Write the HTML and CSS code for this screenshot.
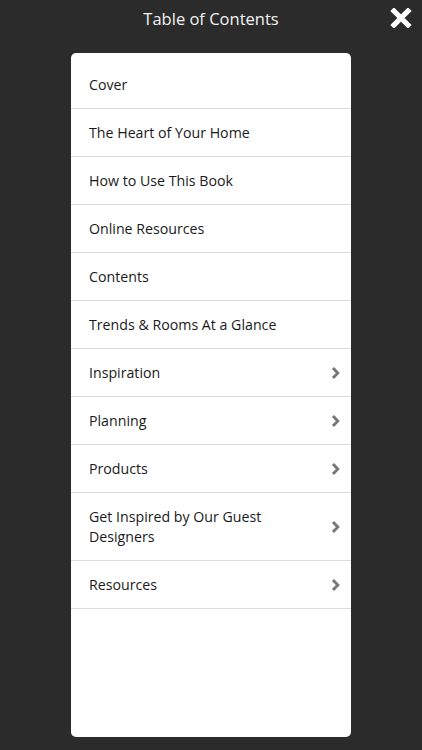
FILE: index.html
```html
<!DOCTYPE html>
<html lang="en">
<head>
<meta charset="utf-8">
<title>Table of Contents</title>
<link rel="stylesheet" href="styles.css">
</head>
<body>
<div class="screen">
  <header class="topbar">
    <h1 class="title">Table of Contents</h1>
    <button class="close" aria-label="Close">
      <svg width="22" height="20" viewBox="0 0 22 20"><path d="M4 3 L18 17 M18 3 L4 17" stroke="#fff" stroke-width="5.2" stroke-linecap="square" fill="none"/></svg>
    </button>
  </header>
  <main class="card">
    <ul class="toc">
      <li class="item"><span class="label">Cover</span></li>
      <li class="item"><span class="label">The Heart of Your Home</span></li>
      <li class="item"><span class="label">How to Use This Book</span></li>
      <li class="item"><span class="label">Online Resources</span></li>
      <li class="item"><span class="label">Contents</span></li>
      <li class="item"><span class="label">Trends &amp; Rooms At a Glance</span></li>
      <li class="item has-children"><span class="label">Inspiration</span><svg class="chev" width="11" height="14" viewBox="0 0 11 14"><path d="M3 2 L7.8 7 L3 12" stroke="#777" stroke-width="2.9" fill="none"/></svg></li>
      <li class="item has-children"><span class="label">Planning</span><svg class="chev" width="11" height="14" viewBox="0 0 11 14"><path d="M3 2 L7.8 7 L3 12" stroke="#777" stroke-width="2.9" fill="none"/></svg></li>
      <li class="item has-children"><span class="label">Products</span><svg class="chev" width="11" height="14" viewBox="0 0 11 14"><path d="M3 2 L7.8 7 L3 12" stroke="#777" stroke-width="2.9" fill="none"/></svg></li>
      <li class="item has-children"><span class="label">Get Inspired by Our Guest Designers</span><svg class="chev" width="11" height="14" viewBox="0 0 11 14"><path d="M3 2 L7.8 7 L3 12" stroke="#777" stroke-width="2.9" fill="none"/></svg></li>
      <li class="item has-children"><span class="label">Resources</span><svg class="chev" width="11" height="14" viewBox="0 0 11 14"><path d="M3 2 L7.8 7 L3 12" stroke="#777" stroke-width="2.9" fill="none"/></svg></li>
    </ul>
  </main>
</div>
</body>
</html>
```
FILE: styles.css
```css
* { box-sizing: border-box; }
html, body {
  margin: 0;
  padding: 0;
  background: #2b2b2b;
}
body {
  font-family: "Open Sans", "Liberation Sans", sans-serif;
}
.screen {
  width: 422px;
  height: 750px;
  display: flex;
  flex-direction: column;
  padding: 0 0 13px;
}
.topbar {
  position: relative;
  height: 53px;
  display: flex;
  align-items: flex-start;
  justify-content: center;
}
.title {
  margin: 6px 0 0;
  font-size: 16.5px;
  font-weight: 400;
  color: #f2f2f2;
  line-height: 26px;
}
.close {
  position: absolute;
  right: 10px;
  top: 8px;
  padding: 0;
  border: 0;
  background: none;
  width: 22px;
  height: 20px;
  display: block;
}
.close svg { display: block; }
.card {
  flex: 1;
  margin: 0 71px 0 71px;
  width: 280px;
  background: #fff;
  border-radius: 5px;
  padding-top: 8px;
}
.toc {
  list-style: none;
  margin: 0;
  padding: 0;
}
.item {
  display: flex;
  align-items: center;
  justify-content: space-between;
  padding: 14px 10px 13px 18px;
  border-bottom: 1px solid #dcdcdc;
  font-size: 14.2px;
  line-height: 20px;
  color: #1a1a1a;
}
.label { flex: 1; padding-right: 40px; }
.item .chev { flex: none; display: block; }
```
